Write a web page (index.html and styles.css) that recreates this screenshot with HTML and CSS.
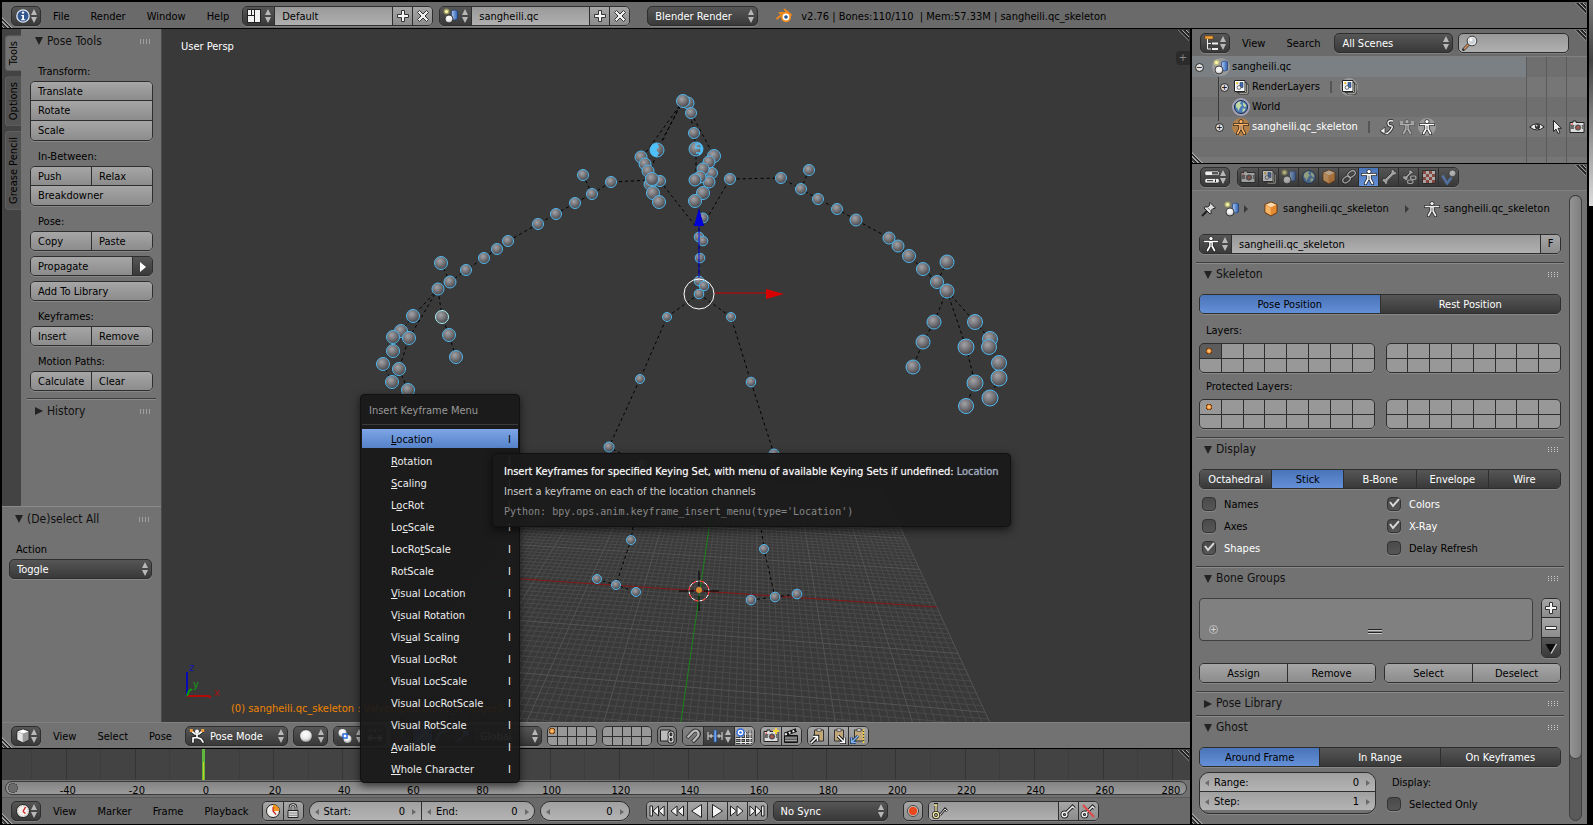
FILE: index.html
```
<!DOCTYPE html>
<html lang="en">
<head>
  <meta charset="UTF-8" />
  <meta name="viewport" content="width=device-width, initial-scale=1.0"/>
  <title>Blender</title>
  <link rel="stylesheet" href="styles.css">
</head>
<body>

<!-- icon set, 16x16 -->
<svg class="defs" aria-hidden="true">
  <defs>
    <radialGradient id="ball" cx="40%" cy="35%" r="65%"><stop offset="0" stop-color="#a2a2a8"/><stop offset="0.5" stop-color="#77777b"/><stop offset="1" stop-color="#48484c"/></radialGradient>
    <radialGradient id="white-ball" cx="45%" cy="35%" r="65%"><stop offset="0" stop-color="#fff"/><stop offset="0.6" stop-color="#e8e8e8"/><stop offset="1" stop-color="#999"/></radialGradient>
    <linearGradient id="blue-cyl"><stop offset="0" stop-color="#a9c9f5"/><stop offset="1" stop-color="#2c5fae"/></linearGradient>
  </defs>
  <symbol id="i-info" viewBox="0 0 16 16"><circle cx="8" cy="8" r="6.200" fill="#33588f" stroke="#dfe6f2" stroke-width="1.300"/><circle cx="8" cy="4.600" r="1.200" fill="#fff"/><path d="M6.300 7H9v4.300h1.200v1H6v-1h1.200V8h-.9z" fill="#fff"/></symbol>
  <symbol id="i-layout" viewBox="0 0 16 16"><rect x="1" y="1" width="14" height="14" fill="#222"/><path d="M2 2h6v5H2zM2 8h6v6H2zM9 2h5v12H9z" fill="#f2f2f2"/><path d="M5.500 2v5" stroke="#222"/></symbol>
  <symbol id="i-plus" viewBox="0 0 16 16"><path d="M6.500 2.500h3v4h4v3h-4v4h-3v-4h-4v-3h4z" fill="#f6f6f6" stroke="#333"/></symbol>
  <symbol id="i-minus" viewBox="0 0 16 16"><path d="M2.500 6.500h11v3h-11z" fill="#f6f6f6" stroke="#333"/></symbol>
  <symbol id="i-x" viewBox="0 0 16 16"><path d="M4.500 2.500 8 6l3.500-3.500 2 2L10 8l3.500 3.500-2 2L8 10l-3.500 3.500-2-2L6 8 2.500 4.500z" fill="#eee" stroke="#333"/></symbol>
  <symbol id="i-scene" viewBox="0 0 16 16"><circle cx="3.500" cy="3.500" r="3" fill="#e8e36a" opacity=".5"/><circle cx="3.500" cy="3.500" r="1.600" fill="#fbf8b0"/><path d="M8.500 3q3-2 6 0v8q-3 2-6 0z" fill="url(#blue-cyl)" stroke="#1f3f75" stroke-width=".7"/><circle cx="6" cy="11" r="4" fill="url(#white-ball)" stroke="#222" stroke-width=".8"/></symbol>
  <symbol id="i-blender" viewBox="0 0 16 16"><path d="M8.500 1.500 15 7M1 10.500 8 5M3.500 5H10" stroke="#f08a1c" stroke-width="1.800" stroke-linecap="round"/><circle cx="10" cy="9.200" r="5" fill="#f08a1c"/><circle cx="10" cy="9" r="3.400" fill="#fff"/><circle cx="10" cy="9" r="1.800" fill="#23568f"/></symbol>
  <symbol id="i-outliner" viewBox="0 0 16 16"><path d="M1 1h8v3H1z" fill="#f5a53c" stroke="#7a4300" stroke-width=".6"/><path d="M3.500 4v10H7M3.500 8.500H7" stroke="#eee" fill="none"/><path d="M8 7.500h6v2H8zM8 13h6v2H8z" fill="#eee"/></symbol>
  <symbol id="i-search" viewBox="0 0 16 16"><path d="M1.500 14.500 7 9" stroke="#333" stroke-width="3" stroke-linecap="round"/><path d="M2 14 6.500 9.500" stroke="#e0935a" stroke-width="1.600"/><circle cx="10" cy="6" r="4.800" fill="#c9d0d6" stroke="#333"/><circle cx="10" cy="6" r="3.800" fill="none" stroke="#eee"/><circle cx="9" cy="4.800" r="1.500" fill="#fff"/></symbol>
  <symbol id="i-layers" viewBox="0 0 16 16"><path d="M6 5h9v10H6z" fill="#f1eee0" stroke="#222" stroke-width=".8"/><path d="M4 3.500h9.500v10H4z" fill="#f1eee0" stroke="#222" stroke-width=".8"/><path d="M1.500 1.500h10.500v11H1.500z" fill="#fff" stroke="#222"/><path d="M3 3h7.500v8H3z" fill="#e8eef8"/><path d="M7 3.500h3v5H7z" fill="#3f6fc0" stroke="#222" stroke-width=".5"/><circle cx="6" cy="8.500" r="1.800" fill="#fff" stroke="#222" stroke-width=".6"/><circle cx="4.200" cy="4.200" r="1.100" fill="#f0c020"/></symbol>
  <symbol id="i-world" viewBox="0 0 16 16"><circle cx="8" cy="8" r="6.500" fill="#4d7cb8" stroke="#1b2a42"/><path d="M3 5q3-3.500 5-2.500L7 5 9 6 7 8.500 5.500 12Q5 9 3 8zM10 3.500q3 1 3.500 4L11.500 8 10 6zM9.500 9.500l3 0q-.5 3-3 3.500z" fill="#c2d8a4"/></symbol>
  <symbol id="i-man" viewBox="0 0 16 16"><g fill="none" stroke-linecap="round" stroke-linejoin="round"><path d="M1.500 5.500h13M7 6v4L4.500 14.500M9 6v4l2.500 4.500" stroke="#222" stroke-width="3.200"/><path d="M1.500 5.500h13M7 6v4L4.500 14.500M9 6v4l2.500 4.500" stroke="currentColor" stroke-width="1.700"/></g><path d="M7.500 7h1v3h-1z" fill="#888"/><circle cx="8" cy="2.600" r="2.100" fill="currentColor" stroke="#222" stroke-width=".8"/></symbol>
  <symbol id="i-path" viewBox="0 0 16 16"><path d="M14 2q-5-1-5 2t3 3-1 5-8 0" fill="none" stroke="#222" stroke-width="3"/><path d="M14 2q-5-1-5 2t3 3-1 5-8 0" fill="none" stroke="#eee" stroke-width="1.400"/><path d="M6 8v7L1 12z" fill="#eee" stroke="#222" stroke-width=".7"/></symbol>
  <symbol id="i-eye" viewBox="0 0 16 16"><path d="M.8 8Q8 1.500 15.200 8 8 14 .8 8z" fill="#eee" stroke="#222"/><circle cx="8.500" cy="7.500" r="2.600" fill="#333"/><circle cx="7.800" cy="6.800" r=".8" fill="#fff"/></symbol>
  <symbol id="i-cursor" viewBox="0 0 16 16"><path d="M4.500 1.500v11L7 10.200l2 4.300 2-1-2-4.200h3.500z" fill="#eee" stroke="#222"/></symbol>
  <symbol id="i-camera" viewBox="0 0 16 16"><path d="M1 3.500h3V2h3v1.500h8v10H1z" fill="#ddd" stroke="#222"/><path d="M1.500 6h13v4h-13z" fill="#666"/><circle cx="9" cy="8.500" r="3.700" fill="#555" stroke="#eee"/><circle cx="9" cy="8.500" r="1.500" fill="#b54"/><circle cx="3.200" cy="5.200" r=".8" fill="#e33"/></symbol>
  <symbol id="i-props" viewBox="0 0 16 16"><rect x=".8" y="2" width="14.400" height="4.600" rx="1.600" fill="#eee" stroke="#222" stroke-width=".7"/><path d="M8 3h6v2.500H8z" fill="#555"/><rect x=".8" y="9.400" width="14.400" height="4.600" rx="1.600" fill="#eee" stroke="#222" stroke-width=".7"/><path d="M3 11.700h6M11.500 10.500v2.500" stroke="#222"/></symbol>
  <symbol id="i-pin" viewBox="0 0 16 16"><path d="M1 15 6 10" stroke="#222" stroke-width="2"/><path d="m9 1.500 5.500 5.500-1.500.8-1-.3-2 2 .2 3L9 13 3 7l.8-1.200 3 .2 2-2-.4-1.200z" fill="#ddd" stroke="#222"/><path d="m6.500 6.500 3 3" stroke="#888"/></symbol>
  <symbol id="i-cube" viewBox="0 0 16 16"><path d="m8 1 6 2.500v8L8 15l-6-3.500v-8z" fill="#e58a32" stroke="#5a2c00" stroke-width=".8"/><path d="m8 1.600 5.400 2.200L8 6.300 2.600 3.800z" fill="#fbd9ad"/><path d="M2.600 4.400 7.600 6.800v7.200L2.600 11z" fill="#f7b568"/></symbol>
  <symbol id="i-vcube" viewBox="0 0 16 16"><path d="m8 1 6 2v9l-6 3-6-3V3z" fill="#999" stroke="#222" stroke-width=".8"/><path d="m8 1.500 5.500 2L8 5.500 2.500 3.500z" fill="#fff"/><path d="M2.500 4 7.700 6v8L2.500 11.500z" fill="#e4e4e4"/></symbol>
  <symbol id="i-link" viewBox="0 0 16 16"><g fill="none" stroke="#222" stroke-width="3"><rect x="6.500" y="2.500" width="8" height="5" rx="2.500" transform="rotate(-35 10.500 5)"/><rect x="1.500" y="8" width="8" height="5" rx="2.500" transform="rotate(-35 5.500 10.500)"/></g><g fill="none" stroke="#ddd" stroke-width="1.300"><rect x="6.500" y="2.500" width="8" height="5" rx="2.500" transform="rotate(-35 10.500 5)"/><rect x="1.500" y="8" width="8" height="5" rx="2.500" transform="rotate(-35 5.500 10.500)"/></g></symbol>
  <symbol id="i-bone" viewBox="0 0 16 16"><path d="M10 4 4.500 9.500q-3-.5-3.500 1.500t2 2q0 2.500 2 2.500t2-4L12.500 6q2.500.5 3-1.500t-2-2Q13.500.5 11.500.5T10 4z" fill="#ddd" stroke="#222" stroke-width=".9"/></symbol>
  <symbol id="i-bonelink" viewBox="0 0 16 16"><path d="M8 4 5 7Q2 6 1.500 8T3 10q.5 2 2.500 1.500T7 8l3-3q2 0 2-1.500T10.500 2Q10 .5 8.500 1T8 4z" fill="#ddd" stroke="#222" stroke-width=".8"/><g fill="none" stroke="#ddd" stroke-width="1.200"><rect x="9.500" y="7" width="5.500" height="3.500" rx="1.700"/><rect x="6.500" y="11" width="5.500" height="3.500" rx="1.700"/></g></symbol>
  <symbol id="i-texture" viewBox="0 0 16 16"><path d="M1.500 1.500h13v13h-13z" fill="#f2e8e4" stroke="#222"/><path d="M2 2h3v3H2zM8 2h3v3H8zM5 5h3v3H5zM11 5h3v3h-3zM2 8h3v3H2zM8 8h3v3H8zM5 11h3v3H5zM11 11h3v3h-3z" fill="#b04a3c"/></symbol>
  <symbol id="i-physics" viewBox="0 0 16 16"><path d="M1.500 6.500 6 14.500l4.500-6" fill="none" stroke="#5d8fdc" stroke-width="2.600"/><circle cx="11.500" cy="4.500" r="3.500" fill="url(#white-ball)" stroke="#222" stroke-width=".7"/></symbol>
  <symbol id="i-pose" viewBox="0 0 16 16"><g fill="none" stroke-linecap="round"><path d="M2.500 3 6 6l4 0 3.500-3M8 6v3.500L4 10v4M8 9.500l4 1.500 2 3" stroke="#222" stroke-width="3.200"/><path d="M2.500 3 6 6l4 0 3.500-3M8 6v3.500L4 10v4M8 9.500l4 1.500 2 3" stroke="#fff" stroke-width="1.700"/></g><circle cx="8" cy="3.500" r="1.900" fill="#fff"/><path d="M.8 1h3v3h-3zM12.200 1h3v3h-3z" fill="#f39b36"/></symbol>
  <symbol id="i-sphere" viewBox="0 0 16 16"><circle cx="8" cy="8" r="6.300" fill="url(#white-ball)" stroke="#222" stroke-width=".6"/></symbol>
  <symbol id="i-pivot" viewBox="0 0 16 16"><circle cx="5.500" cy="5" r="4" fill="url(#white-ball)"/><circle cx="10.500" cy="11" r="4" fill="url(#white-ball)"/><path d="M6 6h4v4H6z" fill="#fff" stroke="#2d6be0" stroke-width="1.500"/></symbol>
  <symbol id="i-arrows" viewBox="0 0 16 16"><path d="M1 2.500h1M4 2.500h1M7 2.500h2M11 2.500h1M14 2.500h1M4.500 7 1.500 10l3 3M11.500 7l3 3-3 3M2 10h12" fill="none" stroke="#eee" stroke-width="1.600"/></symbol>
  <symbol id="i-axes" viewBox="0 0 16 16"><path d="M8 9V1" stroke="#3c3" stroke-width="2"/><path d="m8 9-6 5" stroke="#d33" stroke-width="2"/><path d="m8 9 6 5" stroke="#36d" stroke-width="2"/></symbol>
  <symbol id="i-move" viewBox="0 0 16 16"><path d="M2 14 13 3M7 2.500h6.500V9" fill="none" stroke="#9cc0ff" stroke-width="2"/></symbol>
  <symbol id="i-rotate" viewBox="0 0 16 16"><path d="M3 14Q3 4 13 3" fill="none" stroke="#6f9be0" stroke-width="2"/></symbol>
  <symbol id="i-scale" viewBox="0 0 16 16"><path d="M3 14 12 5M10 3h4v4h-4z" fill="#6f9be0" stroke="#6f9be0" stroke-width="1.500"/></symbol>
  <symbol id="i-lockcam" viewBox="0 0 16 16"><path d="M1.500 2h10v11h-10z" fill="#bbb" stroke="#222"/><g fill="none" stroke="#222" stroke-width="3"><rect x="10" y="4" width="4" height="5" rx="2"/><rect x="10" y="9" width="4" height="5" rx="2"/></g><g fill="none" stroke="#ddd" stroke-width="1.200"><rect x="10" y="4" width="4" height="5" rx="2"/><rect x="10" y="9" width="4" height="5" rx="2"/></g></symbol>
  <symbol id="i-magnet" viewBox="0 0 16 16"><path d="M2 10 8 3.500q3-2 5 0t0 5L7.500 14" fill="none" stroke="#333" stroke-width="4"/><path d="M2.500 9.500 8 3.700q3-2 4.700 0t0 4.600L8 13.500" fill="none" stroke="#bbb" stroke-width="2.200"/></symbol>
  <symbol id="i-incr" viewBox="0 0 16 16"><path d="M1 4v8M4 6v4M12 6v4M15 4v8M1 8h14" stroke="#ddd" fill="none"/><path d="M7 2h2.500v12H7z" fill="#6fa3f0" stroke="#1f4b9a" stroke-width=".6"/></symbol>
  <symbol id="i-snapgrid" viewBox="0 0 16 16"><path d="M5 8v8M9.500 4v12M14 2v14M0 10.500h16M7 6h9M0 14.500h16" stroke="#222" stroke-width="2.600"/><path d="M5 8v8M9.500 4v12M14 2v14M0 10.500h16M7 6h9M0 14.500h16" stroke="#eee" stroke-width="1.200"/><circle cx="4.500" cy="4.500" r="3.500" fill="#fff" stroke="#2d6be0" stroke-width="1.400"/><circle cx="4.500" cy="4.500" r="1.300" fill="#2d6be0"/></symbol>
  <symbol id="i-clap" viewBox="0 0 16 16"><path d="M1.500 7.500h13v7h-13z" fill="#444" stroke="#111"/><path d="M2 10h12M2 12.300h12" stroke="#ddd" stroke-width=".8"/><path d="M1.500 6.500 13.500 2" stroke="#111" stroke-width="3.500"/><path d="M2 6.500 13.500 2" stroke="#eee" stroke-width="2" stroke-dasharray="2 2"/></symbol>
  <symbol id="i-clip" viewBox="0 0 16 16"><path d="M4.500 2h9v11h-9z" fill="#c2a878" stroke="#333"/><path d="M7 .8h4v2.500H7z" fill="#ddd" stroke="#333" stroke-width=".7"/></symbol>
  <symbol id="i-clock" viewBox="0 0 16 16"><circle cx="8" cy="8" r="6.500" fill="#f4f0ec" stroke="#222"/><circle cx="8" cy="8" r="5.200" fill="none" stroke="#999" stroke-dasharray="1 1.700"/><path d="M8 8.500 10.500 4M8 8.500l2.500 2" stroke="#c22" stroke-width="1.400"/></symbol>
  <symbol id="i-range" viewBox="0 0 16 16"><circle cx="8" cy="8" r="6.500" fill="#f4f0ec" stroke="#222"/><path d="M8 8V1.500A6.500 6.500 0 0 1 14.500 8z" fill="#f0941e"/><path d="M8 4v4l3 3.500" fill="none" stroke="#c22" stroke-width="1.200"/></symbol>
  <symbol id="i-lock" viewBox="0 0 16 16"><path d="M5 8V4.500q0-3 3-3t3 3V8" fill="none" stroke="#222" stroke-width="2.600"/><path d="M5 8V4.500q0-3 3-3t3 3V8" fill="none" stroke="#ddd" stroke-width="1"/><path d="M3 7.500h10v7H3z" fill="#ddd" stroke="#222"/><path d="M4 10h8M4 12.300h8" stroke="#888"/></symbol>
  <symbol id="i-play" viewBox="0 0 16 16"><path d="m3.500 1.500 10 6.500-10 6.500z" fill="#f2f2f2" stroke="#222"/></symbol>
  <symbol id="i-ff" viewBox="0 0 16 16"><path d="m1.500 3 6 5-6 5zM8 3l6 5-6 5z" fill="#f2f2f2" stroke="#222"/></symbol>
  <symbol id="i-end" viewBox="0 0 16 16"><path d="m.8 3 5.500 5-5.500 5zM6.500 3 12 8l-5.500 5zM12.500 3h2.500v10h-2.500z" fill="#f2f2f2" stroke="#222"/></symbol>
  <symbol id="i-rec" viewBox="0 0 16 16"><circle cx="8" cy="8" r="5.500" fill="#ccc" stroke="#444"/><circle cx="8" cy="8" r="4.200" fill="#e8481c"/></symbol>
  <symbol id="i-keys" viewBox="0 0 16 16"><path d="M2 1.500h4M4 2v8" stroke="#222" stroke-width="3"/><path d="M2 2h3.500M4 2v8" stroke="#f2e9a0" stroke-width="1.400"/><circle cx="4" cy="12" r="2.600" fill="none" stroke="#222" stroke-width="3"/><circle cx="4" cy="12" r="2.600" fill="none" stroke="#f2e9a0" stroke-width="1.400"/><path d="m8 12 5-6 2 2" fill="none" stroke="#222" stroke-width="2.600"/><path d="m8 12 5-6 2 2" fill="none" stroke="#ddd"/></symbol>
  <symbol id="i-key" viewBox="0 0 16 16"><g fill="none" stroke="#222" stroke-width="3.400"><circle cx="4.500" cy="11.500" r="2.300"/><path d="m6.500 9.500 6-6 2 2"/></g><g fill="none" stroke="#eee" stroke-width="1.500"><circle cx="4.500" cy="11.500" r="2.300"/><path d="m6.500 9.500 6-6 2 2"/></g></symbol>
  <symbol id="i-drop" viewBox="0 0 16 16"><path d="M2.500 4h11L8 13.500z" fill="#0a0a0a"/><path d="M13.500 4 8 13.500" stroke="#ccc" stroke-width="1.400"/></symbol>
</svg>

<header class="area header info">
  <button class="editor" aria-label="Editor type"><svg class="icon"><use href="#i-info"/></svg></button>
  <nav class="menus"><a href="#">File</a><a href="#">Render</a><a href="#">Window</a><a href="#">Help</a></nav>
  <div class="group idblock screen">
    <button class="dark pick" aria-label="Browse screens"><svg class="icon"><use href="#i-layout"/></svg></button>
    <input class="text" type="text" value="Default" aria-label="Screen">
    <button class="sq" aria-label="Add screen"><svg class="icon"><use href="#i-plus"/></svg></button>
    <button class="sq" aria-label="Delete screen"><svg class="icon"><use href="#i-x"/></svg></button>
  </div>
  <div class="group idblock">
    <button class="dark pick" aria-label="Browse scenes"><svg class="icon"><use href="#i-scene"/></svg></button>
    <input class="text" type="text" value="sangheili.qc" aria-label="Scene">
    <button class="sq" aria-label="Add scene"><svg class="icon"><use href="#i-plus"/></svg></button>
    <button class="sq" aria-label="Delete scene"><svg class="icon"><use href="#i-x"/></svg></button>
  </div>
  <select class="engine" aria-label="Render engine"><option>Blender Render</option></select>
  <svg class="icon"><use href="#i-blender"/></svg>
  <span class="stats">v2.76 | Bones:110/110&nbsp; | Mem:57.33M | sangheili.qc_skeleton</span>
</header>

<main>
  <div class="left">
    <section class="area view3d">
      <div class="view-body">
        <aside class="shelf">
          <div class="shelf-top">
            <div class="tabs"><button class="active">Tools</button><button>Options</button><button>Grease Pencil</button></div>
            <div class="tools">
              <h2>Pose Tools</h2>
              <h3>Transform:</h3>
              <div class="group col"><button>Translate</button><button>Rotate</button><button>Scale</button></div>
              <h3>In-Between:</h3>
              <div class="group col"><div class="row"><button>Push</button><button>Relax</button></div><button>Breakdowner</button></div>
              <h3>Pose:</h3>
              <div class="group"><button>Copy</button><button>Paste</button></div>
              <div class="group"><button>Propagate</button><button class="dark more" aria-label="Propagate options"></button></div>
              <div class="group"><button>Add To Library</button></div>
              <h3>Keyframes:</h3>
              <div class="group"><button>Insert</button><button>Remove</button></div>
              <h3>Motion Paths:</h3>
              <div class="group"><button>Calculate</button><button>Clear</button></div>
              <h2 class="closed">History</h2>
            </div>
          </div>
          <div class="redo">
            <h2>(De)select All</h2>
            <label for="action">Action</label>
            <select id="action"><option>Toggle</option></select>
          </div>
        </aside>
        <svg class="canvas" viewBox="162 29 1028 693" preserveAspectRatio="xMidYMid slice">
          <g id="grid"></g>
          <g id="links"></g>
          <g id="bones"></g>
          <!-- manipulator -->
          <path d="M699 278V222" stroke="#0000d8"/>
          <path d="M699 208l5 18h-10z" fill="#0000d8"/>
          <path d="M715 293h51" stroke="#c00"/>
          <path d="M766 289l18 5-18 5z" fill="#d80000"/>
          <circle cx="699" cy="294" r="15" fill="none" stroke="#fff"/>
          <!-- 3d cursor -->
          <circle cx="699" cy="591" r="10" fill="none" stroke="#fff"/>
          <circle cx="699" cy="591" r="10" fill="none" stroke="#f00" stroke-dasharray="4 4"/>
          <path d="M679 591h15M704 591h15M699 571v15M699 596v15" stroke="#000"/>
          <circle cx="699" cy="590" r="3" fill="#d78a2c"/>
          <!-- mini axis -->
          <g fill="none" stroke-width="2"><path d="M187 696v-24" stroke="#0a0ab4"/><path d="M187 696h21l3 1" stroke="#b40a0a"/><path d="M187 696l2-5 3-2" stroke="#0aa00a"/></g>
          <g font-size="11"><text x="189" y="671" fill="#1212b4">z</text><text x="193" y="688" fill="#12a012">y</text><text x="214" y="696" fill="#a01212">x</text></g>
          <text x="181" y="50" font-size="11" fill="#fff">User Persp</text>
          <text x="231" y="712" font-size="11" fill="#f08400">(0) sangheili.qc_skeleton : ValveBiped.Bip01_R_Finger0</text>
        </svg>
        <button class="expand" aria-label="Show properties region">+</button>
      </div>
      <div class="header">
        <button class="editor" aria-label="Editor type"><svg class="icon"><use href="#i-vcube"/></svg></button>
        <nav class="menus"><a href="#">View</a><a href="#">Select</a><a href="#">Pose</a></nav>
        <div class="mode"><svg class="icon"><use href="#i-pose"/></svg><select aria-label="Mode"><option>Pose Mode</option></select></div>
        <button class="editor wide" aria-label="Shading"><svg class="icon"><use href="#i-sphere"/></svg></button>
        <div class="group pivots">
          <button class="dark pick" aria-label="Pivot"><svg class="icon"><use href="#i-pivot"/></svg></button>
          <button class="dark sq" aria-label="Manipulate centers"><svg class="icon"><use href="#i-arrows"/></svg></button>
        </div>
        <div class="group orient">
          <button class="dark sq" aria-label="Manipulator"><svg class="icon"><use href="#i-axes"/></svg></button>
          <button class="blue sq" aria-label="Translate"><svg class="icon"><use href="#i-move"/></svg></button>
          <button class="dark sq" aria-label="Rotate"><svg class="icon"><use href="#i-rotate"/></svg></button>
          <button class="dark sq" aria-label="Scale"><svg class="icon"><use href="#i-scale"/></svg></button>
          <select aria-label="Orientation"><option>Global</option></select>
        </div>
        <div class="layers small" data-cols="5" data-dot="#e58a32"></div>
        <div class="layers small" data-cols="5"></div>
        <button class="single mid" aria-label="Lock to scene"><svg class="icon"><use href="#i-lockcam"/></svg></button>
        <div class="group">
          <button class="sq mid" aria-label="Snap"><svg class="icon"><use href="#i-magnet"/></svg></button>
          <button class="dark pick" aria-label="Snap element"><svg class="icon"><use href="#i-incr"/></svg></button>
          <button class="sq" aria-label="Absolute grid snap"><svg class="icon"><use href="#i-snapgrid"/></svg></button>
        </div>
        <div class="group">
          <button class="sq" aria-label="Render image"><svg class="icon"><use href="#i-camera"/><path d="M13 0v6M10 3h6" stroke="#f4d23c" stroke-width="2"/></svg></button>
          <button class="sq" aria-label="Render animation"><svg class="icon"><use href="#i-clap"/></svg></button>
        </div>
        <div class="group">
          <button class="sq" aria-label="Copy pose"><svg class="icon"><use href="#i-clip"/><path d="m1 15 6-6M3 8.500h4.500V13" fill="none" stroke="#111" stroke-width="3.500"/><path d="m1 15 6-6M3 8.500h4.500V13" fill="none" stroke="#fff" stroke-width="1.500"/></svg></button>
          <button class="sq" aria-label="Paste pose"><svg class="icon"><use href="#i-clip"/><path d="m8 8 6 6M14.500 9.500v5H10" fill="none" stroke="#111" stroke-width="3.500"/><path d="m8 8 6 6M14.500 9.500v5H10" fill="none" stroke="#fff" stroke-width="1.500"/></svg></button>
          <button class="sq" aria-label="Paste flipped pose"><svg class="icon"><use href="#i-clip"/><path d="m8 8-6 6M1.500 9.500v5H6" fill="none" stroke="#234" stroke-width="3"/><path d="m8 8-6 6M1.500 9.500v5H6" fill="none" stroke="#7db0f5" stroke-width="1.500"/><path d="M13.500 1v14" stroke="#f0d040" stroke-width="1.500" stroke-dasharray="2 1"/></svg></button>
        </div>
      </div>
    </section>

    <section class="area timeline">
      <svg class="ticks" id="ticks"></svg>
      <div class="scrub"><svg id="frames"></svg></div>
      <div class="header">
        <button class="editor" aria-label="Editor type"><svg class="icon"><use href="#i-clock"/></svg></button>
        <nav class="menus"><a href="#">View</a><a href="#">Marker</a><a href="#">Frame</a><a href="#">Playback</a></nav>
        <div class="group">
          <button class="sq" aria-label="Use preview range"><svg class="icon"><use href="#i-range"/></svg></button>
          <button class="sq" aria-label="Lock time cursor"><svg class="icon"><use href="#i-lock"/></svg></button>
        </div>
        <div class="group round range">
          <label class="num">Start:<input type="text" value="0"></label>
          <label class="num">End:<input type="text" value="0"></label>
        </div>
        <div class="group round frame"><label class="num"><input type="text" value="0" aria-label="Current frame"></label></div>
        <div class="group play">
          <button class="sq flip" aria-label="First frame"><svg class="icon"><use href="#i-end"/></svg></button>
          <button class="sq flip" aria-label="Previous keyframe"><svg class="icon"><use href="#i-ff"/></svg></button>
          <button class="sq flip" aria-label="Play reversed"><svg class="icon"><use href="#i-play"/></svg></button>
          <button class="sq" aria-label="Play"><svg class="icon"><use href="#i-play"/></svg></button>
          <button class="sq" aria-label="Next keyframe"><svg class="icon"><use href="#i-ff"/></svg></button>
          <button class="sq" aria-label="Last frame"><svg class="icon"><use href="#i-end"/></svg></button>
        </div>
        <select class="sync" aria-label="Sync"><option>No Sync</option></select>
        <button class="single rec" aria-label="Auto keyframe"><svg class="icon"><use href="#i-rec"/></svg></button>
        <div class="group keying">
          <label class="keyset"><svg class="icon"><use href="#i-keys"/></svg><input class="text" type="text" aria-label="Keying set"></label>
          <button class="sq" aria-label="Insert keyframe"><svg class="icon"><use href="#i-key"/></svg></button>
          <button class="sq" aria-label="Delete keyframe"><svg class="icon"><use href="#i-key"/><path d="m3 2 11 12" stroke="#e04848" stroke-width="2"/></svg></button>
        </div>
      </div>
    </section>
  </div>

  <div class="right">
    <section class="area outliner">
      <div class="header">
        <button class="editor" aria-label="Editor type"><svg class="icon"><use href="#i-outliner"/></svg></button>
        <nav class="menus"><a href="#">View</a><a href="#">Search</a></nav>
        <select class="scenes" aria-label="Display mode"><option>All Scenes</option></select>
        <label class="search"><svg class="icon"><use href="#i-search"/></svg><input type="search" aria-label="Filter"></label>
      </div>
      <ul class="tree">
        <li class="lit"><span class="knob">−</span><span class="disc dash"><svg class="icon"><use href="#i-scene"/></svg></span>sangheili.qc</li>
        <li class="in2"><span class="knob">+</span><span class="disc none"><svg class="icon"><use href="#i-layers"/></svg></span>RenderLayers<i class="bar"></i><span class="disc"><svg class="icon"><use href="#i-layers"/></svg></span></li>
        <li class="in3"><span class="disc blueish"><svg class="icon"><use href="#i-world"/></svg></span>World</li>
        <li class="in1 white"><span class="knob">+</span><span class="disc dash orange"><svg class="icon"><use href="#i-man"/></svg></span>sangheili.qc_skeleton<i class="bar"></i><span class="disc none"><svg class="icon"><use href="#i-path"/></svg></span><span class="disc none faded"><svg class="icon"><use href="#i-man"/><path d="M1 2h3v3H1zM12 2h3v3h-3z" fill="#ddd"/></svg></span><span class="disc"><svg class="icon"><use href="#i-man"/></svg></span>
          <span class="toggles"><button aria-label="Visible"><svg class="icon"><use href="#i-eye"/></svg></button><button aria-label="Selectable"><svg class="icon"><use href="#i-cursor"/></svg></button><button aria-label="Renderable"><svg class="icon"><use href="#i-camera"/></svg></button></span></li>
      </ul>
    </section>

    <section class="area properties">
      <div class="header">
        <button class="editor" aria-label="Editor type"><svg class="icon"><use href="#i-props"/></svg></button>
        <div class="group contexts">
          <button class="dark sq" aria-label="Render"><svg class="icon"><use href="#i-camera"/></svg></button>
          <button class="dark sq" aria-label="Render layers"><svg class="icon"><use href="#i-layers"/></svg></button>
          <button class="dark sq" aria-label="Scene"><svg class="icon"><use href="#i-scene"/></svg></button>
          <button class="dark sq" aria-label="World"><svg class="icon"><use href="#i-world"/></svg></button>
          <button class="dark sq" aria-label="Object"><svg class="icon"><use href="#i-cube"/></svg></button>
          <button class="dark sq" aria-label="Constraints"><svg class="icon"><use href="#i-link"/></svg></button>
          <button class="blue sq" aria-label="Data"><svg class="icon"><use href="#i-man"/></svg></button>
          <button class="dark sq" aria-label="Bone"><svg class="icon"><use href="#i-bone"/></svg></button>
          <button class="dark sq" aria-label="Bone constraints"><svg class="icon"><use href="#i-bonelink"/></svg></button>
          <button class="dark sq" aria-label="Texture"><svg class="icon"><use href="#i-texture"/></svg></button>
          <button class="dark sq" aria-label="Physics"><svg class="icon"><use href="#i-physics"/></svg></button>
        </div>
      </div>
      <div class="props-body">
        <div class="panels">
          <div class="context">
            <div class="crumbs">
              <svg class="icon"><use href="#i-pin"/></svg>
              <svg class="icon"><use href="#i-scene"/></svg><i class="chev"></i>
              <svg class="icon"><use href="#i-cube"/></svg><span>sangheili.qc_skeleton</span><i class="chev"></i>
              <svg class="icon"><use href="#i-man"/></svg><span>sangheili.qc_skeleton</span>
            </div>
            <div class="group idblock">
              <button class="dark pick" aria-label="Browse armatures"><svg class="icon"><use href="#i-man"/></svg></button>
              <input class="text" type="text" value="sangheili.qc_skeleton" aria-label="Armature name">
              <button class="sq ctr">F</button>
            </div>
          </div>

          <section class="panel">
            <h2>Skeleton</h2>
            <div class="group ctr"><button class="blue">Pose Position</button><button class="dark">Rest Position</button></div>
            <h3>Layers:</h3>
            <div class="pair wide"><div class="layers" data-cols="8" data-dot="#e58a32" data-on="1"></div><div class="layers" data-cols="8"></div></div>
            <h3>Protected Layers:</h3>
            <div class="pair wide"><div class="layers" data-cols="8" data-dot="#e58a32"></div><div class="layers" data-cols="8"></div></div>
          </section>

          <section class="panel">
            <h2>Display</h2>
            <div class="group ctr"><button class="dark">Octahedral</button><button class="blue">Stick</button><button class="dark">B-Bone</button><button class="dark">Envelope</button><button class="dark">Wire</button></div>
            <div class="checks">
              <label><input type="checkbox"><span>Names</span></label>
              <label><input type="checkbox" checked><span>Colors</span></label>
              <label><input type="checkbox"><span>Axes</span></label>
              <label><input type="checkbox" checked><span>X-Ray</span></label>
              <label><input type="checkbox" checked><span>Shapes</span></label>
              <label><input type="checkbox"><span>Delay Refresh</span></label>
            </div>
          </section>

          <section class="panel">
            <h2>Bone Groups</h2>
            <div class="groups">
              <div class="listbox"><span class="knob">+</span><i class="handle"></i></div>
              <div class="group col side">
                <button aria-label="Add group"><svg class="icon"><use href="#i-plus"/></svg></button>
                <button aria-label="Remove group"><svg class="icon"><use href="#i-minus"/></svg></button>
                <button class="dark" aria-label="Specials"><svg class="icon"><use href="#i-drop"/></svg></button>
              </div>
            </div>
            <div class="pair ctr assign">
              <div class="group"><button>Assign</button><button>Remove</button></div>
              <div class="group"><button>Select</button><button>Deselect</button></div>
            </div>
          </section>

          <section class="panel shut"><h2 class="closed">Pose Library</h2></section>

          <section class="panel">
            <h2>Ghost</h2>
            <div class="group ctr"><button class="blue">Around Frame</button><button class="dark">In Range</button><button class="dark">On Keyframes</button></div>
            <div class="pair ghost">
              <div class="group round col">
                <label class="num">Range:<input type="text" value="0"></label>
                <label class="num">Step:<input type="text" value="1"></label>
              </div>
              <div class="checks one">
                <h4>Display:</h4>
                <label><input type="checkbox"><span>Selected Only</span></label>
              </div>
            </div>
          </section>
          <hr>
        </div>
        <div class="scrollbar"><div class="thumb"></div></div>
      </div>
    </section>
  </div>
</main>

<div class="menu" role="menu">
  <div class="menu-title">Insert Keyframe Menu</div>
  <button class="active"><span><u>L</u>ocation</span><kbd>I</kbd></button>
  <button><span><u>R</u>otation</span><kbd>I</kbd></button>
  <button><span><u>S</u>caling</span><kbd>I</kbd></button>
  <button><span>L<u>o</u>cRot</span><kbd>I</kbd></button>
  <button><span>Lo<u>c</u>Scale</span><kbd>I</kbd></button>
  <button><span>LocRo<u>t</u>Scale</span><kbd>I</kbd></button>
  <button><span>RotScale</span><kbd>I</kbd></button>
  <button><span><u>V</u>isual Location</span><kbd>I</kbd></button>
  <button><span>V<u>i</u>sual Rotation</span><kbd>I</kbd></button>
  <button><span>Vis<u>u</u>al Scaling</span><kbd>I</kbd></button>
  <button><span>Visual LocRot</span><kbd>I</kbd></button>
  <button><span>Visual LocScale</span><kbd>I</kbd></button>
  <button><span>Visual LocRotScale</span><kbd>I</kbd></button>
  <button><span>Visual RotScale</span><kbd>I</kbd></button>
  <button><span><u>A</u>vailable</span><kbd>I</kbd></button>
  <button><span><u>W</u>hole Character</span><kbd>I</kbd></button>
</div>

<div class="tooltip" role="tooltip">
  <p class="tip-main">Insert Keyframes for specified Keying Set, with menu of available Keying Sets if undefined: <em>Location</em></p>
  <p>Insert a keyframe on each of the location channels</p>
  <p class="code">Python: bpy.ops.anim.keyframe_insert_menu(type='Location')</p>
</div>

<script>
  const NS = 'http://www.w3.org/2000/svg';

  function add(parent, tag, attrs, text) {
    const el = document.createElementNS(NS, tag);
    for (const k in attrs) el.setAttribute(k, attrs[k]);
    if (text !== undefined) el.textContent = text;
    parent.appendChild(el);
    return el;
  }

  // floor plane: x to the right, t towards the viewer, lines meet at (755, 211)
  function project(x, t) {
    const s = 1 / (1 / 380 - 0.0000265 * t - 0.00000266 * x);
    return [755 + s * (-0.145 + 0.0151 * x), 211 + s];
  }

  function floorLine(a, b, color) {
    const p = project(a[0], a[1]), q = project(b[0], b[1]);
    add(document.getElementById('grid'), 'line', { x1: p[0], y1: p[1], x2: q[0], y2: q[1], stroke: color });
  }

  for (const bold of [false, true]) {
    for (let i = -40; i <= 40; i++) {
      if ((i % 10 === 0) !== bold || i === 0) continue;
      const c = bold ? '#545454' : '#4a4a4a';
      floorLine([i, -40], [i, 40], c);
      floorLine([-40, i], [40, i], c);
    }
  }
  floorLine([-40, 0], [40, 0], '#8c1616');
  floorLine([0, -40], [0, 40], '#1c841c');

  // parent-child relations drawn as dashed lines
  const links = [
    '652,180 611,182 592,194 575,203 556,214 538,224 508,241 497,249 484,258 466,270 450,282 438,289 442,317 449,335 456,357',
    '583,175 592,194', '441,263 450,282',
    '438,289 413,316 401,331 393,337 393,351 383,364 392,382',
    '438,289 409,338 399,369 408,390',
    '660,181 697,228', '683,101 644,155', '683,101 657,150 650,175', '680,105 662,142',
    '688,103 694,133 696,149 696,180', '691,113 714,156', '699,210 699,294',
    '703,225 730,179 781,178 801,189 818,199 837,209 856,220 889,238 898,246 909,256 923,269 937,282 947,291 934,322 923,342 913,367',
    '809,170 801,189', '947,262 937,282',
    '947,291 966,347 975,383 966,406',
    '947,291 975,322 990,339 989,347 999,363 999,378 990,398',
    '699,294 667,317 640,379 609,447 642,465 631,540 616,585', '597,579 616,585 636,592',
    '699,294 731,317 751,382 774,454 753,470 764,549 775,597', '751,600 775,597 797,594'
  ];
  links.forEach(points => add(document.getElementById('links'), 'polyline', { points, fill: 'none', stroke: '#000', 'stroke-dasharray': '3 3' }));

  // [x, y, radius]
  const bones = [
    [688,103,6],[683,101,6.5],[691,113,5.5],[694,133,5.5],[696,149,7],[657,150,7],
    [641,157,6],[645,164,6],[648,171,6],[660,181,5.5],[650,184,6],[652,179,6.5],[653,193,6.5],[659,202,6.5],
    [714,156,6.5],[712,173,5.5],[709,162,6],[709,182,6],[703,169,6],[700,177,6],[695,180,6],[703,193,6.5],[695,201,6.5],
    [703,218,5],[699,237,4.8],[703,241,4.8],[700,258,4.8],[699,281,4.8],[704,286,4.8],[699,294,4.8],
    [583,175,5.5],[611,182,5.5],[592,194,5.5],[575,203,5.5],[556,214,5.5],[538,224,5.5],[508,241,5.5],[497,249,5.5],
    [484,258,5.5],[466,270,5.5],[450,282,6],[441,263,6.5],[438,289,6],
    [413,316,6.5],[449,335,6.5],[456,357,6.5],[401,331,6.5],[393,337,6.5],[409,338,6.5],[393,351,6.5],[383,364,6.5],
    [399,369,6.5],[392,382,6.5],[408,390,6.5],
    [730,179,5.5],[781,178,5.5],[809,170,5.5],[801,189,5.5],[818,199,5.5],[837,209,5.5],[856,220,6],[889,238,6],
    [898,246,6],[909,256,6.5],[923,269,6.5],[937,282,6.5],[947,262,7],[947,291,7],
    [934,322,7],[923,342,7],[913,367,7],[975,322,7.5],[966,347,8],[990,339,7.5],[989,347,7.5],[999,363,7.5],
    [975,383,8],[999,378,8],[990,398,8],[966,406,7.5],
    [667,317,4.5],[731,317,4.5],[640,379,4.5],[751,382,4.8],[609,447,5],[774,454,5],[642,465,4.5],[753,470,4.5],
    [631,540,4.5],[764,549,4.5],[597,579,4.5],[616,585,4.5],[636,592,4.5],[751,600,4.8],[775,597,4.8],[797,594,4.8]
  ];
  const boneLayer = document.getElementById('bones');
  bones.forEach(b => add(boneLayer, 'circle', { cx: b[0], cy: b[1], r: b[2], fill: 'url(#ball)', stroke: '#50b8f0' }));
  add(boneLayer, 'circle', { cx: 442, cy: 317, r: 6.5, fill: 'url(#ball)', stroke: '#a8f4f8' });
  add(boneLayer, 'path', { d: 'M657 143a7 7 0 0 0 0 14l2-4-3-3 3-3z', fill: '#50c0fa' });
  add(boneLayer, 'path', { d: 'M700 144h-4v4h5v5h-5M699 143l3 4v4l-3 4', fill: 'none', stroke: '#50c0fa', 'stroke-width': 1.5 });

  // timeline, 20 frames every 69px
  const frameX = f => 202 + f * 3.457;
  for (let f = -50; f <= 280; f += 10) {
    add(document.getElementById('ticks'), 'path', { d: 'M' + Math.round(frameX(f)) + '.5 0v31', stroke: f % 20 ? '#3e3e3e' : '#353535' });
    if (f % 20 === 0) {
      add(document.getElementById('frames'), 'text', { x: frameX(f) - (f === 280 ? 5 : 2), y: 12, 'text-anchor': 'middle' }, f);
    }
  }
  add(document.getElementById('ticks'), 'path', { d: 'M201.5 0v31', stroke: '#5fb83c', 'stroke-width': 3 });
  add(document.getElementById('ticks'), 'path', { d: 'M201.5 13v18', stroke: '#c8d020' });

  document.querySelectorAll('.layers').forEach(box => {
    const cols = Number(box.dataset.cols);
    for (let i = 0; i < cols * 2; i++) {
      const cell = document.createElement('button');
      cell.setAttribute('aria-label', 'Layer ' + (i + 1));
      if (i === 0 && box.dataset.dot) cell.className = 'dot' + (box.dataset.on ? ' on' : '');
      box.appendChild(cell);
    }
  });
</script>
</body>
</html>
```
FILE: styles.css
```
* {
  box-sizing: border-box;
}

body {
  margin: 0;
  padding: 2px 6px 1px 2px;
  height: 100vh;
  display: flex;
  flex-direction: column;
  gap: 1px;
  overflow: hidden;
  position: relative;
  background: linear-gradient(#777, #444 60px, #ddd 206px, #000 206px) right / 4px 100% no-repeat, #000;
  font-family: "DejaVu Sans Condensed", "DejaVu Sans", sans-serif;
  font-size: 11px;
  line-height: 22px;
  color: #000;
}

button, input, select {
  font: inherit;
  color: inherit;
  margin: 0;
  padding: 0;
  border: 0;
  outline: 0;
  border-radius: 0;
  background: none;
}

a {
  color: inherit;
  text-decoration: none;
}

.defs {
  position: absolute;
  width: 0;
  height: 0;
}

.icon {
  width: 16px;
  height: 16px;
  flex: none;
  display: block;
}

h2 {
  margin: 0;
  font-size: 12px;
  font-weight: normal;
  line-height: 24px;
  color: #111;
  display: flex;
  align-items: center;
}

h2::before {
  content: "";
  border: 4px solid transparent;
  border-top: 8px solid #222;
  border-bottom: 0;
  margin-right: 4px;
}

h2.closed::before {
  border: 4px solid transparent;
  border-left: 8px solid #222;
  border-right: 0;
}

/* dotted drag grip */
h2::after {
  content: "";
  width: 11px;
  height: 5px;
  margin-left: auto;
  background: repeating-linear-gradient(90deg, #ccc 0 1px, transparent 1px 3px);
  clip-path: polygon(0 0, 100% 0, 100% 20%, 0 20%, 0 40%, 100% 40%, 100% 60%, 0 60%, 0 80%, 100% 80%, 100% 100%, 0 100%);
}

h3, h4 {
  margin: 0;
  height: 20px;
  font-size: 11px;
  font-weight: normal;
}

/* areas */
.area {
  position: relative;
  background: #727272;
}

.area::after {
  content: "";
  position: absolute;
  top: 1px;
  right: 1px;
  width: 11px;
  height: 11px;
  background: repeating-linear-gradient(45deg, #222 0 1px, #a5a5a5 1px 2px, #444 2px 3px);
  clip-path: polygon(0 0, 100% 0, 100% 100%);
}

.area::before {
  content: "";
  position: absolute;
  z-index: 1;
  bottom: 0;
  left: 0;
  width: 11px;
  height: 11px;
  background: repeating-linear-gradient(45deg, #222 0 1px, #a5a5a5 1px 2px, #444 2px 3px);
  clip-path: polygon(0 0, 100% 100%, 0 100%);
}

.header {
  flex: none;
  height: 26px;
  display: flex;
  align-items: center;
  padding: 0 9px;
  gap: 5px;
  background: #6a6a6a;
}

.info {
  padding-top: 2px;
}

.menus {
  display: flex;
  gap: 21px;
  height: 20px;
  margin: 0 8px 0 7px;
}

main {
  flex: 1;
  min-height: 0;
  display: flex;
  gap: 2px;
}

.left, .right {
  display: flex;
  flex-direction: column;
  gap: 1px;
  min-width: 0;
}

.left {
  flex: 1;
}

.right {
  flex: none;
  width: 395px;
}

/* widgets */
.group, .single, .editor, select, .layers, .search, .mode {
  border: 1px solid #2e2e2e;
  border-radius: 5px;
  overflow: hidden;
  box-shadow: 0 1px 0 rgba(255, 255, 255, 0.15);
  flex: none;
}

.group {
  display: flex;
  height: 20px;
}

.group button, .single {
  flex: 1;
  line-height: 18px;
  text-align: left;
  padding: 1px 0 0 7px;
  background: linear-gradient(#a6a6a6, #8c8c8c);
}

.group > * + *, .row > * + * {
  border-left: 1px solid #2e2e2e;
}

.group.col {
  flex-direction: column;
  height: auto;
}

.group.col > * {
  height: 20px;
  flex: none;
}

.group.col > *:first-child {
  height: 18px;
}

.group.col > * + * {
  border-left: 0;
  border-top: 1px solid #2e2e2e;
}

.row {
  display: flex;
}

.ctr button, .group .ctr {
  text-align: center;
  padding: 1px 0 0;
}

.group .sq, .single {
  flex: none;
  width: 20px;
  padding: 0;
  display: flex;
  align-items: center;
  justify-content: center;
}

.single {
  height: 20px;
}

.group .dark, select, .editor, .mode {
  background: linear-gradient(#565656, #393939);
  color: #fff;
}

.group .blue {
  background: linear-gradient(#4a74b8, #6490d8);
}

.group .mid, .mid {
  background: linear-gradient(#828282, #747474);
}

/* up/down arrows shared by every drop-down */
select, .editor, .group .pick {
  appearance: none;
  height: 20px;
  line-height: 18px;
  background: url("data:image/svg+xml,%3Csvg xmlns='http://www.w3.org/2000/svg' width='6' height='14'%3E%3Cpath d='M3 0l3 6H0zM3 14l3-6H0z' fill='%23b8b8b8'/%3E%3C/svg%3E") right 3px center no-repeat, linear-gradient(#565656, #393939);
}

select {
  padding: 1px 16px 0 7px;
}

.editor {
  width: 30px;
  padding-left: 3px;
  display: flex;
  align-items: center;
}

.editor.wide {
  width: 35px;
  padding-left: 4px;
}

.group .pick {
  flex: none;
  width: 31px;
  height: 18px;
  padding: 0 0 0 3px;
}

.text {
  min-width: 0;
  flex: 1;
  height: 18px;
  padding: 2px 0 0 7px;
  background: linear-gradient(#999, #b0b0b0);
}

.idblock {
  width: 191px;
}

.info .screen {
  margin-right: 1px;
}

.engine {
  width: 111px;
  margin: 0 13px 0 12px;
}

.stats {
  margin-left: 4px;
  height: 20px;
  white-space: nowrap;
}

.mode {
  width: 103px;
  height: 20px;
  display: flex;
  align-items: center;
  padding-left: 3px;
}

.mode select {
  flex: 1;
  height: 18px;
  border: 0;
  padding-left: 5px;
  box-shadow: none;
}

.orient select {
  width: 69px;
  height: 18px;
  border: 0;
  border-radius: 0;
  border-left: 1px solid #2e2e2e;
}

.layers {
  display: grid;
  grid-template-columns: repeat(8, 1fr);
  grid-template-rows: 14px 14px;
  height: 30px;
  background: #2e2e2e;
  gap: 1px;
  overflow: hidden;
}

.layers button {
  background: #989898;
}

.layers .on {
  background: #5c5c5c;
}

.layers .dot {
  background-image: radial-gradient(circle 3px at 9px 7px, #ffc078 0 1px, #e58a32 2px, #5a2c00 3px, transparent 3px);
}

.layers.small {
  width: 50px;
  height: 20px;
  grid-template-columns: repeat(5, 1fr);
  grid-template-rows: 9px 8px;
}

.layers.small .dot {
  background-image: radial-gradient(circle 3px at 4px 4px, #ffc078 0 1px, #e58a32 2px, #5a2c00 3px, transparent 3px);
}

.round {
  border-radius: 10px;
}

.num {
  flex: 1;
  min-width: 0;
  height: 18px;
  line-height: 18px;
  display: flex;
  align-items: center;
  padding: 1px 5px 0;
  background: linear-gradient(#a0a0a0, #b4b4b4);
}

.num input {
  flex: 1;
  min-width: 0;
  text-align: right;
}

.num::before, .num::after {
  content: "";
  border: 3px solid transparent;
  border-right: 4px solid #6a6a6a;
  border-left: 0;
  margin-right: 5px;
}

.num::after {
  border: 3px solid transparent;
  border-left: 4px solid #6a6a6a;
  border-right: 0;
  margin: 0 0 0 7px;
}

/* 3d view */
.view3d {
  flex: 1;
  min-height: 0;
  display: flex;
  flex-direction: column;
}

.view3d > .header {
  background: #727272;
  border-top: 1px solid #808080;
}

.view-body {
  flex: 1;
  min-height: 0;
  display: flex;
  position: relative;
  background: #393939;
}

.shelf {
  width: 160px;
  flex: none;
  display: flex;
  flex-direction: column;
  background: #727272;
  border-right: 1px solid #4a4a4a;
}

.shelf-top {
  display: flex;
  height: 477px;
  background: #434343;
}

.tabs {
  width: 19px;
  padding: 6px 0 0 3px;
  display: flex;
  flex-direction: column;
  gap: 5px;
}

.tabs button {
  writing-mode: vertical-rl;
  transform: rotate(180deg);
  line-height: 16px;
  padding: 5px 0;
  background: #535353;
  border: 1px solid #606060;
  border-left: 0;
  border-radius: 0 4px 4px 0;
}

.tabs .active {
  background: #727272;
}

.tools {
  flex: 1;
  padding: 0 8px 0 9px;
  background: #727272;
}

.tools h2 {
  padding: 0 2px 0 5px;
}

.tools h2:first-child {
  margin-bottom: 8px;
}

.tools h3 {
  padding-left: 8px;
}

.tools .group {
  margin-bottom: 5px;
}

.tools .group > button, .row button {
  flex: 1 1 0;
}

.tools .group.col > button {
  flex: none;
}

.tools .group > .more {
  flex: none;
  width: 20px;
}

.more::before {
  content: "";
  display: block;
  width: 0;
  border: 5px solid transparent;
  border-left: 6px solid #fff;
  border-right: 0;
}

.tools h2.closed {
  margin: 7px -3px 0;
  padding: 0 5px 0 8px;
  border-top: 1px solid #3e3e3e;
  box-shadow: inset 0 1px 0 #8a8a8a;
}

.redo {
  flex: 1;
  border-top: 1px solid #8a8a8a;
  padding: 0 9px 0 7px;
}

.redo h2 {
  padding: 0 2px 0 6px;
  margin-bottom: 8px;
}

.redo label {
  display: block;
  height: 20px;
  padding-left: 7px;
}

.redo select {
  display: block;
  width: 100%;
}

.canvas {
  flex: 1;
  min-width: 0;
  height: 100%;
}

.expand {
  position: absolute;
  top: 22px;
  right: 0;
  width: 14px;
  height: 14px;
  line-height: 12px;
  background: #2b2b2b;
  color: #888;
  border-radius: 4px 0 0 4px;
}

/* timeline */
.timeline {
  flex: none;
  background: #434343;
}

.ticks {
  display: block;
  width: 100%;
  height: 31px;
}

.scrub {
  height: 18px;
  padding: 1px 3px;
  background: #727272;
  border-bottom: 1px solid #5a5a5a;
}

.scrub svg {
  display: block;
  width: 100%;
  height: 14px;
  border: 1px solid #3a3a3a;
  border-radius: 7px;
  background: radial-gradient(circle 5px at 7px 6px, #6a6a6a 4px, #444 5px, transparent 5px), linear-gradient(#848484, #9a9a9a);
  overflow: visible;
}

.range {
  width: 226px;
}

.frame {
  width: 90px;
}

.play {
  margin-left: 11px;
}

.sync {
  width: 115px;
}

.rec {
  margin-left: 10px;
}

.flip .icon {
  transform: scaleX(-1);
}

.keying {
  width: 171px;
}

.keyset {
  flex: 1;
  min-width: 0;
  display: flex;
  align-items: center;
  padding-left: 3px;
  background: linear-gradient(#999, #b0b0b0);
}

.keyset .text {
  background: none;
}

/* outliner */
.outliner .header, .properties > .header {
  padding-left: 8px;
}

.outliner .header {
  height: 27px;
}

.scenes {
  width: 119px;
  margin-left: 1px;
}

.search {
  width: 111px;
  height: 20px;
  display: flex;
  align-items: center;
  padding-left: 3px;
  background: linear-gradient(#999, #b0b0b0);
}

.search input {
  min-width: 0;
  flex: 1;
}

.tree {
  list-style: none;
  position: relative;
  margin: 0;
  padding: 0;
  height: 107px;
  border-top: 1px solid #808080;
  background:
    linear-gradient(#5a5a5a, #5a5a5a) right 60px top / 1px 100% no-repeat,
    linear-gradient(#5a5a5a, #5a5a5a) right 40px top / 1px 100% no-repeat,
    linear-gradient(#5a5a5a, #5a5a5a) right 20px top / 1px 100% no-repeat,
    repeating-linear-gradient(#6f6f6f 0 20px, #767676 20px 40px);
}

/* hierarchy line */
.tree::before {
  content: "";
  position: absolute;
  left: 26px;
  top: 20px;
  width: 1px;
  height: 44px;
  background: #3a3a3a;
}

.tree li {
  height: 20px;
  display: flex;
  align-items: center;
  padding-left: 3px;
}

.tree .lit {
  margin-right: 61px;
  background: #7b8084;
}

.tree .in1 {
  padding-left: 23px;
}

.tree .in2 {
  padding-left: 28px;
}

.tree .in3 {
  padding-left: 40px;
}

.in2 .knob {
  margin-right: 3px;
}

.tree .white {
  color: #fff;
}

.knob {
  width: 9px;
  height: 9px;
  line-height: 7px;
  font-size: 9px;
  text-align: center;
  border: 1px solid #222;
  border-radius: 5px;
  background: #ddd;
  color: #000;
  flex: none;
}

.disc {
  width: 18px;
  height: 18px;
  padding: 1px;
  border-radius: 9px;
  background: #9a9a9a;
  margin-right: 2px;
  flex: none;
  color: #fff;
}

.disc.none {
  background: none;
}

.disc.blueish {
  background: #a0a0b8;
}

.disc.orange {
  background: #b08048;
  color: #ffb060;
}

.faded {
  opacity: 0.4;
}

.dash {
  margin-left: 8px;
}

.bar {
  width: 2px;
  height: 12px;
  margin: 0 8px 0 10px;
  background: #555;
}

.toggles {
  display: flex;
  margin-left: auto;
}

.toggles button {
  width: 20px;
  padding-left: 2px;
}

/* properties */
.properties {
  flex: 1;
  min-height: 0;
  display: flex;
  flex-direction: column;
}

.contexts {
  margin-left: 2px;
}

.contexts .icon {
  opacity: 0.6;
}

.contexts .blue .icon {
  opacity: 1;
  color: #fff;
}

.idblock .pick {
  color: #fff;
}

.props-body {
  flex: 1;
  min-height: 0;
  display: flex;
  gap: 5px;
  padding: 0 5px 0 4px;
  border-top: 1px solid #808080;
}

.panels {
  flex: 1;
  min-width: 0;
  overflow: hidden;
}

.context {
  padding: 8px 3px;
}

.context .idblock {
  width: auto;
}

.crumbs {
  display: flex;
  align-items: center;
  gap: 4px;
  height: 20px;
  padding-left: 2px;
  margin-bottom: 15px;
}

.crumbs .icon {
  color: #eee;
}

.crumbs .icon + .icon {
  margin-left: 3px;
}

.chev {
  border: 4px solid transparent;
  border-left: 4px solid #3a3a3a;
  border-right: 0;
  margin-right: 11px;
}

.crumbs span + .chev {
  margin-left: 12px;
}

.panel {
  padding: 0 3px 8px;
  border-top: 1px solid #3e3e3e;
  box-shadow: inset 0 1px 0 #8a8a8a;
}

.panel h2 {
  margin-bottom: 8px;
  padding: 0 2px 0 5px;
  line-height: 23px;
}

.panel.shut {
  padding-bottom: 0;
}

.panel.shut h2 {
  margin: 0;
}

.panel h3 {
  height: 26px;
  line-height: 28px;
  padding-left: 7px;
}

.panel .group.ctr button {
  flex: 1 1 0;
}

.panel .group.ctr + h3 {
  margin-top: 3px;
}

.pair {
  display: grid;
  grid-template-columns: 1fr 1fr;
  gap: 8px;
}

.pair.wide {
  gap: 11px;
}

.checks {
  display: grid;
  grid-template-columns: 1fr 1fr;
  column-gap: 8px;
  row-gap: 2px;
  padding-top: 5px;
}

.checks.one {
  display: block;
  padding: 0;
}

.checks h4 {
  padding-left: 8px;
  margin-bottom: 2px;
}

.checks label {
  display: flex;
  align-items: center;
  gap: 8px;
  height: 20px;
  padding-left: 3px;
}

.checks input {
  appearance: none;
  width: 14px;
  height: 14px;
  border: 1px solid #333;
  border-radius: 4px;
  background: linear-gradient(#4a4a4a, #565656);
  box-shadow: 0 1px 0 rgba(255, 255, 255, 0.15);
}

.checks span {
  padding-top: 1px;
}

.checks input:checked {
  background: url("data:image/svg+xml,%3Csvg xmlns='http://www.w3.org/2000/svg' width='12' height='12'%3E%3Cpath d='M2 4l3 4 7-8' fill='none' stroke='%23d8d8d8' stroke-width='2'/%3E%3C/svg%3E") center no-repeat, linear-gradient(#4a4a4a, #565656);
}

.checks input:checked + span {
  color: #fff;
}

.groups {
  display: flex;
  align-items: flex-start;
  gap: 8px;
}

.listbox {
  flex: 1;
  height: 43px;
  border: 1px solid #3e3e3e;
  border-radius: 4px;
  background: #808080;
  display: grid;
  grid-template-columns: 9px 1fr;
  align-items: end;
  padding: 0 0 6px 9px;
}

.listbox .knob {
  background: none;
  border-color: #bbb;
  color: #ddd;
}

.handle {
  width: 14px;
  height: 5px;
  justify-self: center;
  background: linear-gradient(#222 0 1px, #ccc 1px 2px, #808080 2px 3px, #222 3px 4px, #ccc 4px);
}

.group.side {
  width: 20px;
}

.side button {
  padding: 0 0 0 1px;
}

.assign {
  margin-top: 5px;
}

.assign button {
  flex: 1 1 0;
}

.ghost {
  margin-top: 5px;
}

.ghost .num {
  height: 19px;
}

.panels hr {
  margin: 2px 0 0;
  border: 0;
  border-top: 1px solid #3e3e3e;
}

.scrollbar {
  width: 13px;
  margin: 4px 0 3px;
  border: 1px solid #3e3e3e;
  border-radius: 7px;
  background: #5a5a5a;
}

.thumb {
  height: 90%;
  border-radius: 6px;
  background: linear-gradient(90deg, #949494, #7e7e7e);
  box-shadow: 0 0 0 1px #3e3e3e;
}

/* popup menu */
.menu, .tooltip {
  position: absolute;
  background: rgba(25, 25, 25, 0.94);
  border: 1px solid #111;
  border-radius: 4px;
  box-shadow: 0 3px 8px rgba(0, 0, 0, 0.6);
}

.menu {
  z-index: 2;
  left: 360px;
  top: 394px;
  width: 160px;
  padding: 5px 1px 4px;
  color: #eee;
}

.menu-title {
  color: #999;
  height: 25px;
  padding: 0 7px;
  margin-bottom: 4px;
  border-bottom: 1px solid #3c3c3c;
}

.menu button {
  display: flex;
  justify-content: space-between;
  width: 100%;
  height: 19px;
  line-height: 20px;
  margin-bottom: 3px;
  padding: 1px 7px 0 29px;
}

.menu button:last-child {
  margin-bottom: 0;
}

.menu .active {
  background: linear-gradient(#7ea6e8, #5682c8);
  color: #000;
}

.menu kbd {
  font: inherit;
}

.tooltip {
  z-index: 3;
  left: 492px;
  top: 453px;
  padding: 8px 11px 4px;
  line-height: 20px;
  white-space: nowrap;
  color: #ccc;
}

.tooltip p {
  margin: 0;
}

.tooltip .tip-main {
  color: #fff;
  text-shadow: 0 0 1px rgba(255, 255, 255, 0.5);
}

.tooltip em {
  font-style: normal;
  color: #a0b0c8;
}

.tooltip .code {
  font-family: "DejaVu Sans Mono", monospace;
  font-size: 10px;
  color: #888;
}
```
